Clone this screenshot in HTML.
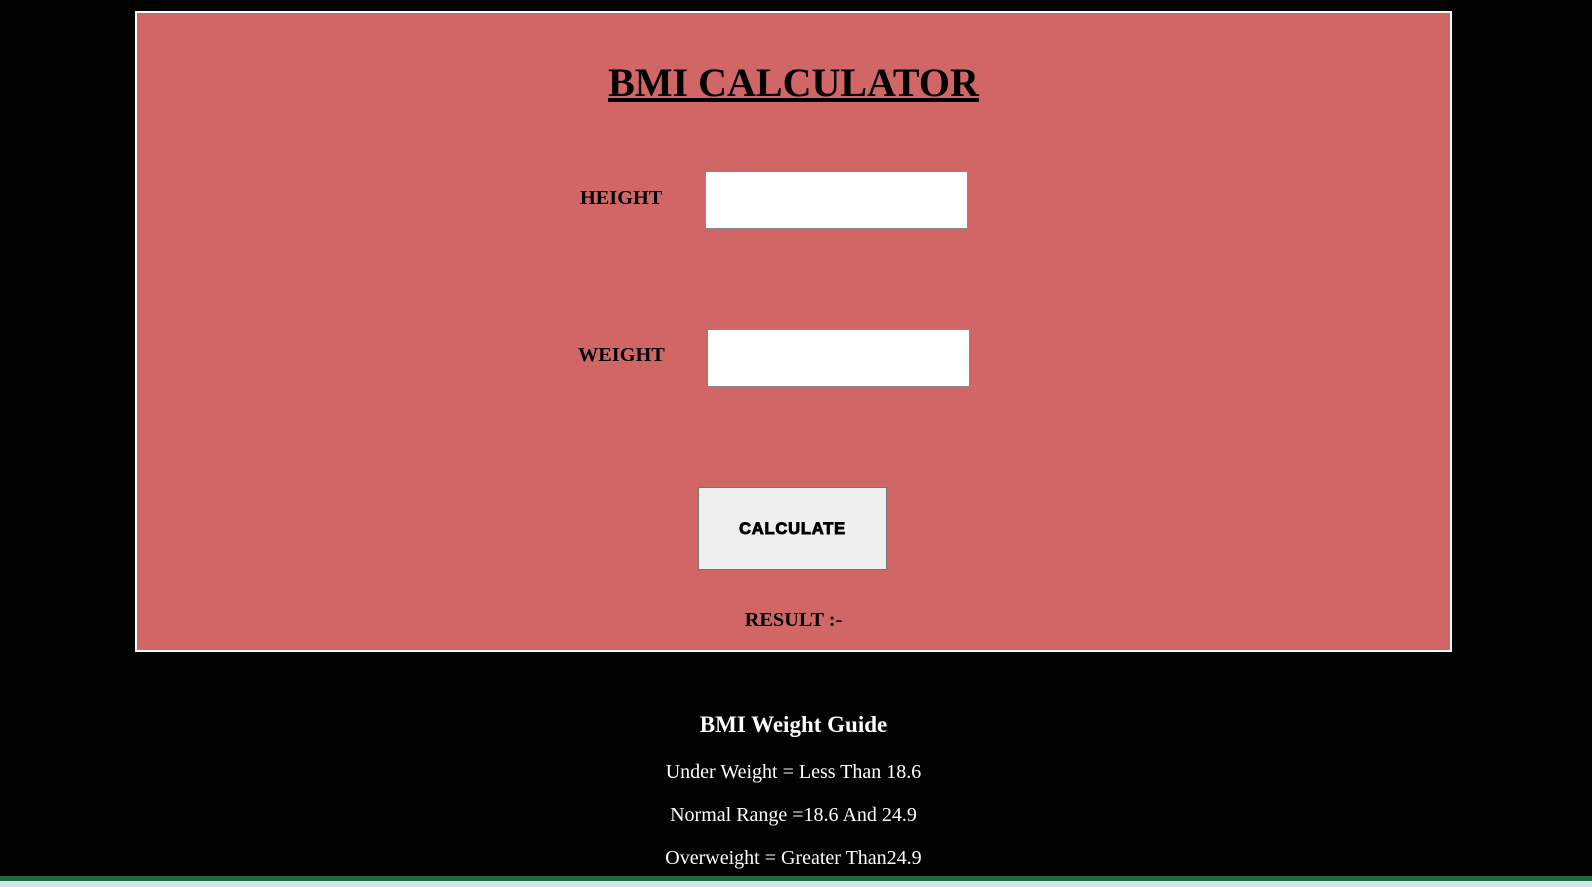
<!DOCTYPE html>
<html><head><style>
body{margin:0;background:#020202;width:1592px;height:887px;position:relative;overflow:hidden;font-family:"Liberation Serif",serif;}
.box{position:absolute;left:135px;top:11px;width:1313px;height:637px;background:#d16666;border:2px solid #fff;}
.a{position:absolute;white-space:nowrap;}
.c{left:0;width:1587px;text-align:center;}
.in{position:absolute;background:#fff;border:1px solid #888;width:261px;height:56px;}
.btn{position:absolute;left:698px;top:487px;width:189px;height:83px;background:#efefef;border:1px solid #777;font-family:"Liberation Sans",sans-serif;font-weight:900;font-size:16.5px;display:flex;align-items:center;justify-content:center;letter-spacing:0.8px;-webkit-text-stroke:0.9px #000;padding-top:2px;box-sizing:border-box;}
.g{color:#fff;font-size:20px;}
</style></head><body>
<div class="box"></div>
<div class="a c" style="top:59px;font-size:40px;font-weight:bold;text-decoration:underline;">BMI CALCULATOR</div>
<div class="a" style="left:580px;top:187px;font-size:20.3px;font-weight:bold;">HEIGHT</div>
<div class="in" style="left:705px;top:171px;"></div>
<div class="a" style="left:578px;top:344px;font-size:20.3px;font-weight:bold;">WEIGHT</div>
<div class="in" style="left:707px;top:329px;"></div>
<div class="btn">CALCULATE</div>
<div class="a c" style="top:609px;font-size:20.3px;font-weight:bold;">RESULT :-</div>
<div class="a c g" style="top:712px;font-size:23px;font-weight:bold;">BMI Weight Guide</div>
<div class="a c g" style="top:761px;">Under Weight = Less Than 18.6</div>
<div class="a c g" style="top:804px;">Normal Range =18.6 And 24.9</div>
<div class="a c g" style="top:847px;">Overweight = Greater Than24.9</div>
<div style="position:absolute;left:0;top:876px;width:1592px;height:5px;background:#1e6b3a;"></div>
<div style="position:absolute;left:0;top:881px;width:1592px;height:6px;background:#d6e0ea;"></div>
</body></html>
